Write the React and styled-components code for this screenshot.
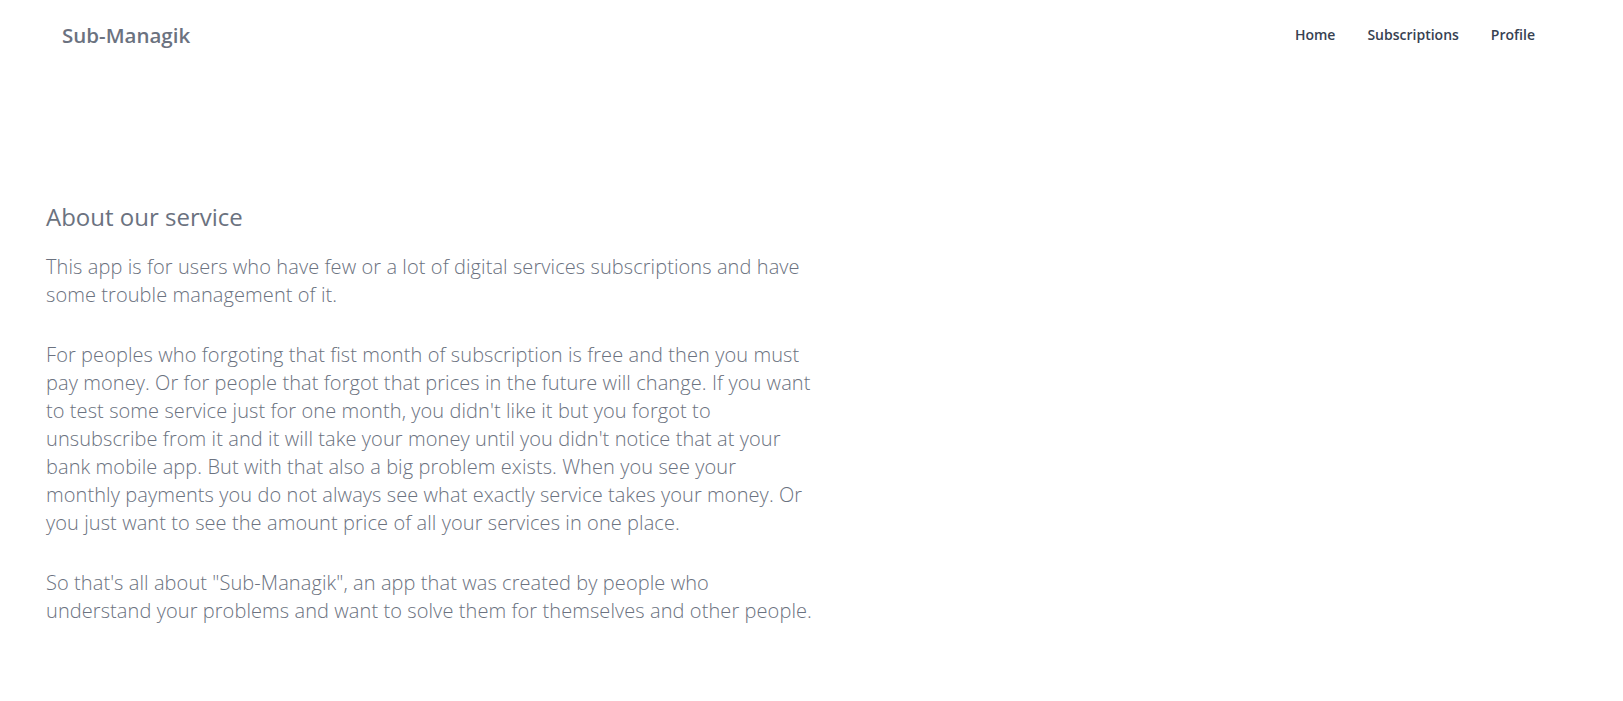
import styled, { createGlobalStyle } from "styled-components";

const GlobalStyle = createGlobalStyle`
    * {
        box-sizing: border-box;
    }

    body {
        margin: 0;
        background: #ffffff;
        font-family: "Open Sans", "Noto Sans", sans-serif;
    }
`;

export default function App() {
    return (
        <>
            <GlobalStyle />
            <Header>
                <Logo>Sub-Managik</Logo>
                <Nav>
                    <NavLink>Home</NavLink>
                    <NavLink>Subscriptions</NavLink>
                    <NavLink>Profile</NavLink>
                </Nav>
            </Header>
            <Main>
                <AboutColumn>
                    <Title>About our service</Title>
                    <Text>
                        This app is for users who have few or a lot of digital services subscriptions and have
                        some trouble management of it.
                    </Text>
                    <Text>
                        For peoples who forgoting that fist month of subscription is free and then you must
                        pay money. Or for people that forgot that prices in the future will change. If you want
                        to test some service just for one month, you didn't like it but you forgot to
                        unsubscribe from it and it will take your money until you didn't notice that at your
                        bank mobile app. But with that also a big problem exists. When you see your
                        monthly payments you do not always see what exactly service takes your money. Or
                        you just want to see the amount price of all your services in one place.
                    </Text>
                    <Text>
                        So that's all about "Sub-Managik", an app that was created by people who
                        understand your problems and want to solve them for themselves and other people.
                    </Text>
                </AboutColumn>
            </Main>
        </>
    );
}

const Header = styled.header`
    display: flex;
    align-items: center;
    justify-content: space-between;
    height: 69px;
    padding: 0 88px 0 62px;
`;

const Logo = styled.span`
    font-size: 20.5px;
    font-weight: 600;
    color: #6b7280;
`;

const Nav = styled.nav`
    display: flex;
    gap: 32px;
`;

const NavLink = styled.a`
    font-size: 14px;
    font-weight: 600;
    color: #374151;
    cursor: pointer;
`;

const Main = styled.main`
    padding: 132px 46px 0;
`;

const AboutColumn = styled.section`
    max-width: 768px;
`;

const Title = styled.h2`
    margin: 0 0 20px;
    font-size: 24px;
    font-weight: 400;
    line-height: 32px;
    color: #6b7280;
`;

const Text = styled.p`
    margin: 0 0 32px;
    font-size: 20px;
    font-weight: 300;
    line-height: 28px;
    letter-spacing: 0.08px;
    color: #6b7280;
`;
